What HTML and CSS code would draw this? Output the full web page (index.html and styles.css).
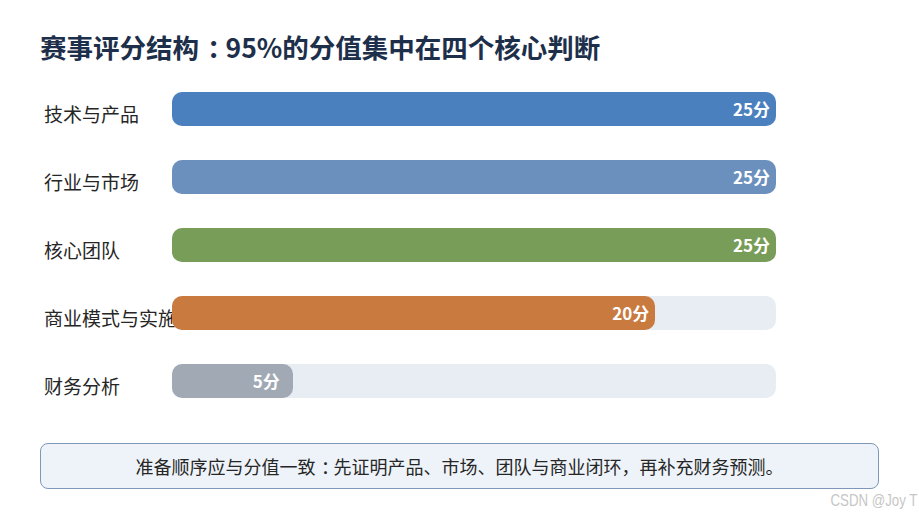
FILE: index.html
```html
<!DOCTYPE html>
<html lang="zh-CN">
<head>
<meta charset="utf-8">
<title>赛事评分结构</title>
<link rel="stylesheet" href="styles.css">
</head>
<body>
<div class="page">
  <h1 class="title">赛事评分结构<span class="colon">：</span>95%的分值集中在四个核心判断</h1>
  <div class="chart">
    <div class="row">
      <div class="label">技术与产品</div>
      <div class="track"><div class="fill c1" style="width:100%"><span class="val">25分</span></div></div>
    </div>
    <div class="row">
      <div class="label">行业与市场</div>
      <div class="track"><div class="fill c2" style="width:100%"><span class="val">25分</span></div></div>
    </div>
    <div class="row">
      <div class="label">核心团队</div>
      <div class="track"><div class="fill c3" style="width:100%"><span class="val">25分</span></div></div>
    </div>
    <div class="row">
      <div class="label">商业模式与实施</div>
      <div class="track"><div class="fill c4" style="width:80%"><span class="val">20分</span></div></div>
    </div>
    <div class="row">
      <div class="label">财务分析</div>
      <div class="track"><div class="fill c5" style="width:20%"><span class="val val-small">5分</span></div></div>
    </div>
  </div>
  <div class="note">准备顺序应与分值一致<span class="colon">：</span>先证明产品、市场、团队与商业闭环，再补充财务预测。</div>
</div>
<div class="watermark">CSDN @Joy T</div>
</body>
</html>
```
FILE: styles.css
```css
html, body {
  margin: 0;
  padding: 0;
  background: #ffffff;
}
body {
  font-family: "Noto Sans CJK SC", "Noto Sans", sans-serif;
  width: 919px;
  height: 517px;
  overflow: hidden;
  position: relative;
}
.page {
  padding: 30px 40px 0;
}
.title {
  margin: 0;
  font-size: 26.5px;
  line-height: 34px;
  font-weight: 700;
  color: #1d2f4a;
  letter-spacing: 0;
}
.colon {
  padding-left: 0.3em;
  letter-spacing: -0.3em;
}
.chart {
  margin-top: 28px;
  display: flex;
  flex-direction: column;
  gap: 34px;
  padding-left: 4px;
}
.row {
  display: grid;
  grid-template-columns: 128px 604px;
  align-items: start;
  height: 34px;
}
.label {
  margin-top: 9px;
  font-size: 19px;
  line-height: 26px;
  color: #262626;
  white-space: nowrap;
}
.track {
  height: 34px;
  border-radius: 10px;
  background: #e8edf4;
  display: flex;
}
.fill {
  height: 34px;
  border-radius: 10px;
  display: flex;
  align-items: center;
  justify-content: flex-end;
  box-sizing: border-box;
  padding-right: 6px;
}
.val {
  color: #ffffff;
  font-weight: 700;
  font-size: 17px;
  line-height: 20px;
}
.val-small {
  margin-right: 7px;
}
.c1 { background: #4b80bf; }
.c2 { background: #6b90be; }
.c3 { background: #789d58; }
.c4 { background: #c97a3f; }
.c5 { background: #a1a9b5; }
.note {
  margin-top: 45px;
  border: 1px solid #7e97b8;
  border-radius: 8px;
  background: #eef3f9;
  text-align: center;
  font-size: 18px;
  line-height: 24px;
  padding: 10px 0;
  color: #262626;
}
.watermark {
  position: absolute;
  right: 2px;
  top: 490px;
  font-family: "Liberation Sans", sans-serif;
  font-size: 17px;
  line-height: 22px;
  color: #c6c6c6;
  transform: scaleX(0.78);
  transform-origin: right center;
}
```
